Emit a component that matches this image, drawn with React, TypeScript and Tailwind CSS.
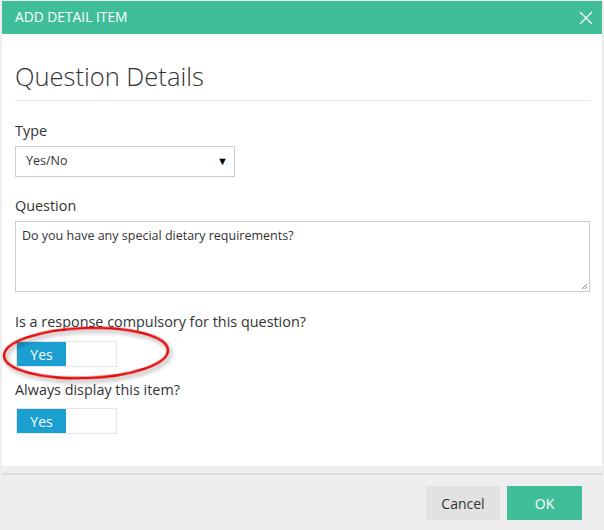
import React from "react"

const Toggle = () => (
  <div className="flex h-[26px] w-[101px] border border-[#e6e6e6] bg-white">
    <div className="flex w-[49px] items-center justify-center bg-[#1b9ed0] text-[14px] text-white">Yes</div>
  </div>
)

export default function App() {
  return (
    <div className="relative h-[530px] w-[604px] bg-[#eeeeee] pl-[2px] pt-[1px] pr-[2px]" style={{ fontFamily: '"Open Sans", sans-serif' }}>
      <div className="flex h-[33px] items-center justify-between bg-[#40be9a] pl-[13px] pr-[8px] text-white">
        <span className="text-[13.8px]">ADD DETAIL ITEM</span>
        <svg width="14" height="14" viewBox="0 0 14 14" className="mr-[1px]">
          <path d="M1 1L13 13M13 1L1 13" stroke="white" strokeWidth="1.2" />
        </svg>
      </div>
      <div className="h-[432px] bg-white pl-[13px] pr-[12px] pt-[26px]">
        <h1 className="border-b border-[#e8e8e8] pb-[8px] text-[25.5px] font-light leading-[32px] text-[#333]">Question Details</h1>
        <div className="mt-[20px] text-[14.4px] leading-[20px] text-[#333]">Type</div>
        <div className="mt-[5px] flex h-[31px] w-[220px] items-center justify-between border border-[#ccc] pl-[10px] pr-[6px] text-[12.5px] text-[#333]">
          <span>Yes/No</span>
          <span className="text-[11px] text-black">▼</span>
        </div>
        <div className="mt-[19px] text-[14.4px] leading-[20px] text-[#333]">Question</div>
        <div className="relative mt-[5px] h-[71px] border border-[#ccc] px-[6px] pt-[5px] text-[12.5px] text-[#333]">
          Do you have any special dietary requirements?
          <svg width="7" height="7" className="absolute bottom-[1px] right-[1px]" viewBox="0 0 7 7">
            <path d="M1 6L6 1M4 6L6 4" stroke="#888" strokeWidth="1" />
          </svg>
        </div>
        <div className="mt-[20px] text-[14.4px] leading-[20px] text-[#333]">Is a response compulsory for this question?</div>
        <div className="mt-[9px] ml-[1px]"><Toggle /></div>
        <div className="mt-[13px] text-[14.4px] leading-[20px] text-[#333]">Always display this item?</div>
        <div className="mt-[8px] ml-[1px]"><Toggle /></div>
      </div>
      <div className="mt-[7px] h-[2px] bg-[#dddddd]" />
      <div className="flex justify-end gap-[7px] pr-[20px] pt-[11px]">
        <button className="h-[34px] w-[74px] bg-[#e2e2e2] text-[14px] text-[#333]">Cancel</button>
        <button className="h-[34px] w-[75px] bg-[#40be9a] text-[14px] text-white">OK</button>
      </div>
      <svg className="pointer-events-none absolute left-0 top-[322px]" width="184" height="72" viewBox="0 0 184 72">
        <defs>
          <filter id="sh" x="-20%" y="-30%" width="140%" height="160%">
            <feDropShadow dx="2" dy="3" stdDeviation="2" floodColor="#000" floodOpacity="0.35" />
          </filter>
        </defs>
        <ellipse cx="86" cy="31" rx="82" ry="25" fill="none" stroke="#e41010" strokeWidth="2.6" filter="url(#sh)" transform="rotate(-2 86 31)" />
      </svg>
    </div>
  )
}
